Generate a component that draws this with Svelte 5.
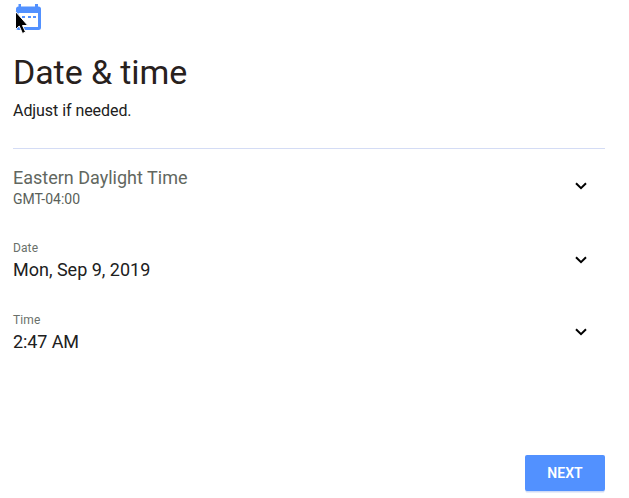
<script>
  const fields = [
    { kind: 'zone', top: 'Eastern Daylight Time', bottom: 'GMT-04:00' },
    { kind: 'value', top: 'Date', bottom: 'Mon, Sep 9, 2019' },
    { kind: 'value', top: 'Time', bottom: '2:47 AM' }
  ];
</script>

<main>
  <header>
    <div class="logo">
      <svg class="calendar" width="25" height="26" viewBox="0 0 25 26">
        <path fill="#5291ff" fill-rule="evenodd" d="M2.500 0h2.500v2.500h14V0h3v2.500h.500a2.500 2.500 0 0 1 2.500 2.500v18.500a2.500 2.500 0 0 1-2.500 2.500H2.500a2.500 2.500 0 0 1-2.500-2.500V5a2.500 2.500 0 0 1 2.500-2.500ZM2.500 9v14h19.500V9Z" />
        <path fill="#5291ff" d="M6 12h3v2H6zm6 0h3v2h-3zm5 0h3v2h-3z" />
      </svg>
      <svg class="cursor" width="14" height="24" viewBox="0 0 14 24">
        <path d="M.5.5v18l3.700-3.500 3.300 7.500 3-1.500-3-6.500h5.300Z" fill="#000" stroke="#fff" stroke-width="1" />
      </svg>
    </div>
    <h1>Date &amp; time</h1>
    <p>Adjust if needed.</p>
  </header>

  <section>
    {#each fields as field}
      <div class="row {field.kind}">
        <div class="text">
          <div class="top">{field.top}</div>
          <div class="bottom">{field.bottom}</div>
        </div>
        <svg class="chevron" width="12" height="8" viewBox="0 0 12 8">
          <path d="M1 1.2 6 6.1l5-4.9" fill="none" stroke="#000" stroke-width="2" />
        </svg>
      </div>
    {/each}
  </section>

  <footer><button>NEXT</button></footer>
</main>

<style>
  :global(body) { margin: 0; background: #fff; }
  main {
    box-sizing: border-box;
    width: 629px;
    height: 498px;
    padding: 0 24px 7px 13px;
    display: flex;
    flex-direction: column;
    overflow: hidden;
    font-family: Roboto, sans-serif;
    color: #202020;
  }
  header {
    box-sizing: border-box;
    height: 149px;
    border-bottom: 1px solid #d4dcf5;
  }
  .logo { position: relative; height: 52px; padding: 4px 0 0 3px; box-sizing: border-box; }
  .calendar { display: block; }
  .cursor { position: absolute; left: 2px; top: 11px; }
  h1 { margin: 0; font-size: 34px; line-height: 40px; font-weight: 400; color: #28211d; letter-spacing: -0.1px; }
  p { margin: 9px 0 0; font-size: 16px; line-height: 20px; letter-spacing: -0.06px; }
  .row { display: flex; justify-content: space-between; height: 72px; }
  .zone { height: 91px; }
  .zone .top { margin-top: 18px; font-size: 18px; line-height: 22px; color: #626760; }
  .zone .bottom { margin-top: 1px; font-size: 14px; line-height: 18px; color: #5a5f5a; }
  .value .top { font-size: 12px; line-height: 16px; color: #6a706a; letter-spacing: 0.1px; }
  .value .bottom { margin-top: 3px; font-size: 18px; line-height: 22px; }
  .value:last-child .bottom { letter-spacing: -0.1px; }
  .chevron { margin: 16px 18px 0 0; }
  .zone .chevron { margin-top: 33px; }
  footer { display: flex; justify-content: flex-end; margin-top: auto; }
  button {
    width: 80px;
    height: 36px;
    padding: 0;
    border: 0;
    border-radius: 2px;
    background: #5291ff;
    box-shadow: 0 2px 0 -0.5px #d0dbf5;
    color: #fff;
    font: 600 14px Roboto, sans-serif;
  }
</style>
